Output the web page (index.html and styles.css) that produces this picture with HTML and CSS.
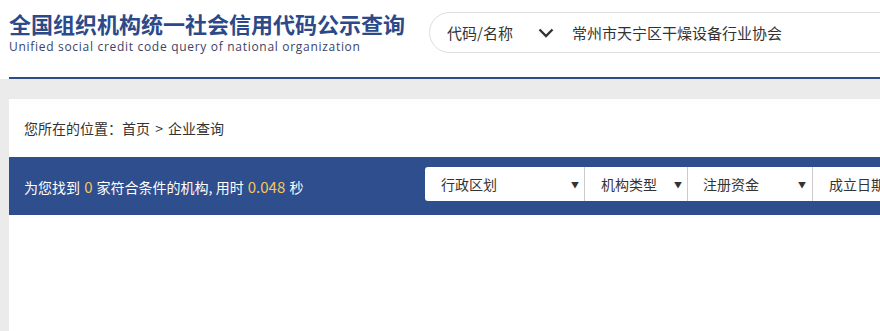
FILE: index.html
```html
<!DOCTYPE html>
<html lang="zh-CN">
<head>
    <meta charset="UTF-8">
    <title>全国组织机构统一社会信用代码公示查询</title>
    <link rel="stylesheet" href="styles.css">
</head>
<body>

<div class="header">
    <div class="container header-inner">
        <div class="logo">
            <h1>全国组织机构统一社会信用代码公示查询</h1>
            <p>Unified social credit code query of national organization</p>
        </div>
        <div class="search-box">
            <span class="search-type">代码/名称</span>
            <svg class="chevron" width="16" height="10" viewBox="0 0 16 10">
                <path d="M1.5 1.5 L8 8 L14.5 1.5" fill="none" stroke="#333" stroke-width="2.4"/>
            </svg>
            <span class="search-text">常州市天宁区干燥设备行业协会</span>
        </div>
    </div>
</div>

<div class="main">
    <div class="container panel">
        <div class="breadcrumb">您所在的位置：首页 <span class="sep">&gt;</span> 企业查询</div>
        <div class="result-bar">
            <div class="result-text">
                为您找到 <span class="num">0</span> 家符合条件的机构, 用时 <span class="num">0.048</span> 秒
            </div>
            <div class="filters">
                <div class="filter f-area">行政区划<span class="arrow">&#9660;</span></div>
                <div class="filter f-type">机构类型<span class="arrow">&#9660;</span></div>
                <div class="filter f-money">注册资金<span class="arrow">&#9660;</span></div>
                <div class="filter f-date">成立日期<span class="arrow">&#9660;</span></div>
            </div>
        </div>
        <div class="results"></div>
    </div>
</div>

</body>
</html>
```

FILE: styles.css
```css
html, body {
    margin: 0;
    padding: 0;
    overflow: hidden;
}
body {
    font-family: "Noto Sans CJK SC", "Microsoft YaHei", sans-serif;
    color: #333;
    background-color: #ebebeb;
}
.container {
    width: 1200px;
    margin-left: 9px;
}
.header {
    background-color: #fff;
}
.header-inner {
    height: 77px;
    border-bottom: 2px solid #2d4c8c;
    display: flex;
    align-items: flex-start;
}
.logo {
    width: 420px;
    padding-top: 7px;
}
.logo h1 {
    margin: 0;
    font-size: 22px;
    line-height: 32px;
    font-weight: bold;
    color: #2c4a8a;
}
.logo p {
    margin: 1.2px 0 0;
    font-family: "Open Sans", sans-serif;
    font-size: 12px;
    line-height: 14px;
    letter-spacing: 0.7px;
    color: #3a4466;
}
.search-box {
    margin-top: 12px;
    height: 39px;
    width: 600px;
    border: 1px solid #ddd;
    border-radius: 21px;
    display: flex;
    align-items: center;
    padding-left: 17px;
    font-size: 15px;
}
.search-type {
    width: 91px;
}
.chevron {
    margin-right: 18px;
}
.main {
    padding-top: 20px;
}
.panel {
    background-color: #fff;
    height: 240px;
}
.breadcrumb {
    height: 58px;
    line-height: 58px;
    padding-left: 15px;
    font-size: 14px;
}
.sep {
    padding: 0 2px;
}
.result-bar {
    height: 58px;
    background-color: #2e4e8d;
    display: flex;
    align-items: center;
}
.result-text {
    width: 401px;
    padding-left: 15px;
    color: #fff;
    font-size: 14px;
}
.num {
    color: #f5c55a;
    font-size: 15px;
    padding: 0 1px;
}
.filters {
    display: flex;
    background-color: #fff;
    border-radius: 3px;
    height: 34px;
    margin-bottom: 4px;
}
.filter {
    display: flex;
    align-items: center;
    justify-content: space-between;
    font-size: 14px;
    border-right: 1px solid #ccc;
    box-sizing: border-box;
}
.arrow {
    font-size: 8px;
    color: #333;
}
.f-area {
    width: 160px;
    padding: 0 5px 0 16px;
}
.f-type {
    width: 103px;
    padding: 0 5px 0 16px;
}
.f-money {
    width: 125px;
    padding: 0 6px 0 15px;
}
.f-date {
    width: 125px;
    padding: 0 6px 0 16px;
    border-right: none;
}
```
